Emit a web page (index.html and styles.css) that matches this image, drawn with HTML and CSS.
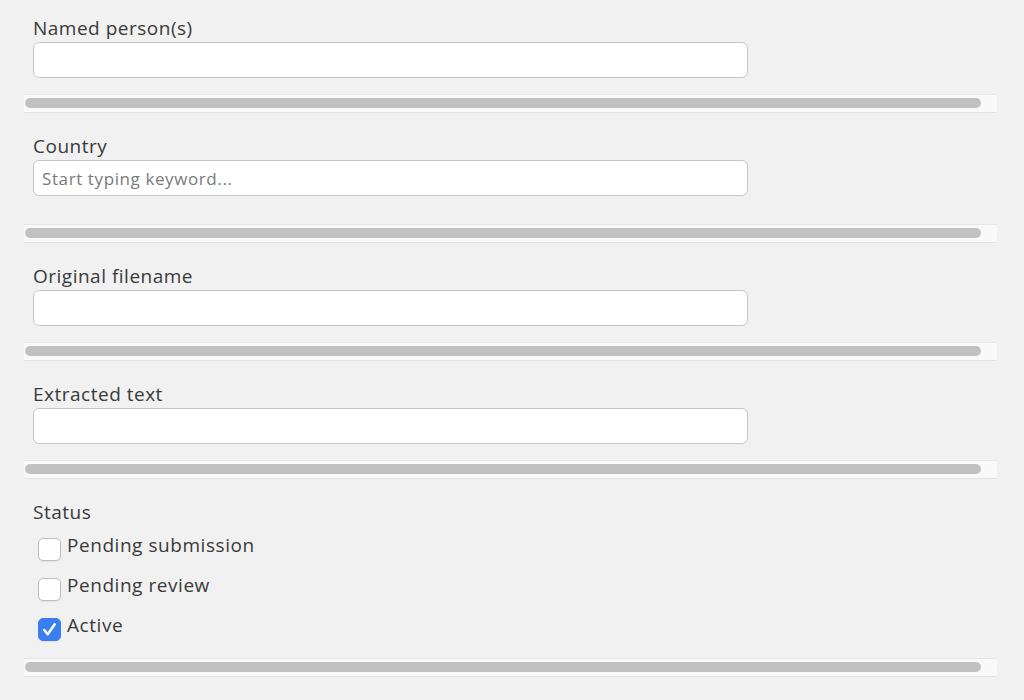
FILE: index.html
```html
<!DOCTYPE html>
<html lang="en">
<head>
<meta charset="utf-8">
<title>Filters</title>
<link rel="stylesheet" href="styles.css">
</head>
<body>
<div class="page">
  <section class="field">
    <label class="label">Named person(s)</label>
    <input class="input" type="text">
  </section>
  <div class="scrollbar"><div class="thumb"></div></div>

  <section class="field field-tall">
    <label class="label">Country</label>
    <input class="input" type="text" placeholder="Start typing keyword...">
  </section>
  <div class="scrollbar"><div class="thumb"></div></div>

  <section class="field">
    <label class="label">Original filename</label>
    <input class="input" type="text">
  </section>
  <div class="scrollbar"><div class="thumb"></div></div>

  <section class="field">
    <label class="label">Extracted text</label>
    <input class="input" type="text">
  </section>
  <div class="scrollbar"><div class="thumb"></div></div>

  <section class="field field-status">
    <div class="label">Status</div>
    <div class="options">
      <label class="option"><span class="box"></span><span class="option-text">Pending submission</span></label>
      <label class="option"><span class="box"></span><span class="option-text">Pending review</span></label>
      <label class="option"><span class="box checked"><svg viewBox="0 0 24 24" width="24" height="24"><path d="M6 12.5 L10 17.5 L18 6" fill="none" stroke="#fff" stroke-width="2.8" stroke-linecap="round" stroke-linejoin="round"/></svg></span><span class="option-text">Active</span></label>
    </div>
  </section>
  <div class="scrollbar"><div class="thumb"></div></div>
</div>
</body>
</html>
```
FILE: styles.css
```css
html, body {
  margin: 0;
  padding: 0;
  background: #f1f1f1;
}
body {
  font-family: "Open Sans", "Noto Sans", sans-serif;
  color: #3a3a3a;
}
.page {
  width: 973px;
  margin-left: 24px;
  padding-top: 17px;
}
.field {
  display: flex;
  flex-direction: column;
  align-items: flex-start;
  gap: 3px;
  padding-left: 9px;
  padding-bottom: 16px;
}
.field + .scrollbar + .field {
  margin-top: 22px;
}
.field-tall {
  padding-bottom: 28px;
}
.label {
  font-size: 19px;
  letter-spacing: 0.5px;
  line-height: 22px;
  height: 22px;
  color: #3a3a3a;
}
.input {
  box-sizing: border-box;
  width: 715px;
  height: 36px;
  margin: 0;
  border: 1px solid #c6c6c6;
  border-radius: 6px;
  background: #fff;
  padding: 0 8px;
  font-family: inherit;
  font-size: 17px;
  letter-spacing: 0.6px;
  color: #333;
  outline: none;
}
.input::placeholder {
  color: #7a7a7a;
}
.scrollbar {
  box-sizing: border-box;
  height: 19px;
  background: #f9f9f9;
  border-top: 1px solid #e6e6e6;
  border-bottom: 1px solid #e3e3e3;
  padding: 3px 16px 0 1px;
}
.thumb {
  height: 10px;
  border-radius: 5px;
  background: #c1c1c1;
}
.field-status {
  padding-bottom: 17px;
}
.options {
  display: flex;
  flex-direction: column;
  gap: 16px;
  margin-top: 11px;
  padding-left: 5px;
}
.option {
  display: flex;
  align-items: flex-start;
  gap: 6px;
  height: 24px;
}
.box {
  box-sizing: border-box;
  width: 23px;
  height: 23px;
  margin-top: 1px;
  border: 1px solid #bdbdbd;
  border-radius: 5px;
  background: #fff;
  box-shadow: 0 1px 1px rgba(0,0,0,0.06);
  display: flex;
  align-items: center;
  justify-content: center;
}
.box.checked {
  background: #3a7ff2;
  border-color: #3a7ff2;
}
.box svg {
  width: 21px;
  height: 21px;
}
.option-text {
  font-size: 19px;
  letter-spacing: 0.55px;
  line-height: 20px;
  margin-top: -2px;
  color: #3a3a3a;
}
```
